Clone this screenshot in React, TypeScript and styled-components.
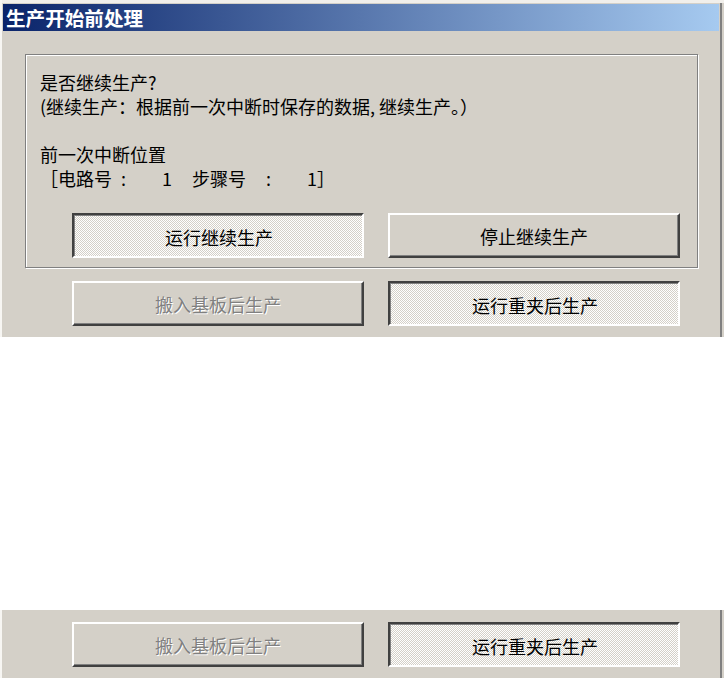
import React from "react";
import styled, { createGlobalStyle, css } from "styled-components";

const Global = createGlobalStyle`
  html, body { margin: 0; padding: 0; background: #ffffff; }
  body { font-family: "Noto Sans CJK SC", "Noto Sans", sans-serif; }
  * { box-sizing: border-box; }
`;

const FACE = "#d4d0c8";

const Page = styled.div`
  width: 724px;
  height: 678px;
  display: flex;
  flex-direction: column;
  background: #ffffff;
`;

const Window = styled.div`
  width: 724px;
  height: 337px;
  background: ${FACE};
  padding: 4px 5px 0 3px;
  box-shadow:
    inset 2px 0 0 #f7f6f3,
    inset 0 3px 0 #f1efeb,
    inset -2px 0 0 ${FACE},
    inset -4px 0 0 #808080;
  display: flex;
  flex-direction: column;
`;

const TitleBar = styled.div`
  height: 27px;
  background: linear-gradient(to right, #0a246a, #a6caf0);
  color: #ffffff;
  font-weight: 700;
  font-size: 19.6px;
  line-height: 27px;
  padding-left: 3px;
  white-space: nowrap;
`;

const Body = styled.div`
  padding: 23px 20px 0 22px;
  display: flex;
  flex-direction: column;
`;

const GroupBox = styled.div`
  width: 673px;
  height: 214px;
  border: 1px solid #808080;
  box-shadow: inset 1px 1px 0 #ffffff, 1px 1px 0 #ffffff;
  padding: 15px 0 0 0;
  display: flex;
  flex-direction: column;
`;

const TextBlock = styled.div`
  padding-left: 14px;
  font-size: 18px;
  line-height: 24px;
  color: #000000;
  white-space: pre;
`;

const Line = styled.div<{ $gapBefore?: boolean }>`
  height: 24px;
  margin-top: ${(p) => (p.$gapBefore ? "24px" : "0")};
`;

const LocationLine = styled.div`
  height: 24px;
  display: flex;
  align-items: baseline;
`;

const Colon = styled.span<{ $ml: number }>`
  margin-left: ${(p) => p.$ml}px;
`;

const Num = styled.span<{ $w: number }>`
  display: inline-block;
  width: ${(p) => p.$w}px;
  text-align: right;
`;

const Label = styled.span<{ $ml?: number }>`
  margin-left: ${(p) => p.$ml ?? 0}px;
`;

const ButtonRow = styled.div<{ $inset: number; $mt: number }>`
  display: flex;
  gap: 24px;
  padding-left: ${(p) => p.$inset}px;
  margin-top: ${(p) => p.$mt}px;
`;

const Btn = styled.button<{ $down?: boolean }>`
  width: 292px;
  height: 45px;
  padding: 0;
  margin: 0;
  font-family: "Noto Sans CJK SC", "Noto Sans", sans-serif;
  font-size: 18px;
  line-height: 1;
  color: #000000;
  border-style: solid;
  border-width: 2px;
  outline: none;
  cursor: default;
  ${(p) =>
    p.$down
      ? css`
          border-color: #404040 #ffffff #ffffff #404040;
          box-shadow: inset 1px 1px 0 #808080;
          background-color: #ffffff;
          background-image: conic-gradient(
            ${FACE} 25%,
            transparent 0 50%,
            ${FACE} 0 75%,
            transparent 0
          );
          background-size: 2px 2px;
          padding: 2px 0 0 2px;
        `
      : css`
          border-color: #ffffff #404040 #404040 #ffffff;
          box-shadow: inset -1px -1px 0 #808080;
          background: ${FACE};
        `}
  &:disabled {
    color: #808080;
    text-shadow: 1px 1px 0 #ffffff;
  }
`;

const Strip = styled.div`
  margin-top: 273px;
  height: 68px;
  background: ${FACE};
  padding-top: 12px;
  box-shadow:
    inset 2px 0 0 #f7f6f3,
    inset -2px 0 0 ${FACE},
    inset -4px 0 0 #808080;
`;

function LowerButtons() {
  return (
    <>
      <Btn disabled>搬入基板后生产</Btn>
      <Btn $down>运行重夹后生产</Btn>
    </>
  );
}

export default function App() {
  return (
    <Page>
      <Global />
      <Window>
        <TitleBar>生产开始前处理</TitleBar>
        <Body>
          <GroupBox>
            <TextBlock>
              <Line>是否继续生产?</Line>
              <Line>(继续生产：根据前一次中断时保存的数据, 继续生产。）</Line>
              <Line $gapBefore>前一次中断位置</Line>
              <LocationLine>
                <Label>［电路号</Label>
                <Colon $ml={9}>:</Colon>
                <Num $w={46}>1</Num>
                <Label $ml={20}>步骤号</Label>
                <Colon $ml={20}>:</Colon>
                <Num $w={46}>1</Num>
                <Label>］</Label>
              </LocationLine>
            </TextBlock>
            <ButtonRow $inset={46} $mt={23}>
              <Btn $down>运行继续生产</Btn>
              <Btn>停止继续生产</Btn>
            </ButtonRow>
          </GroupBox>
          <ButtonRow $inset={47} $mt={13}>
            <LowerButtons />
          </ButtonRow>
        </Body>
      </Window>
      <Strip>
        <ButtonRow $inset={72} $mt={0}>
          <LowerButtons />
        </ButtonRow>
      </Strip>
    </Page>
  );
}
